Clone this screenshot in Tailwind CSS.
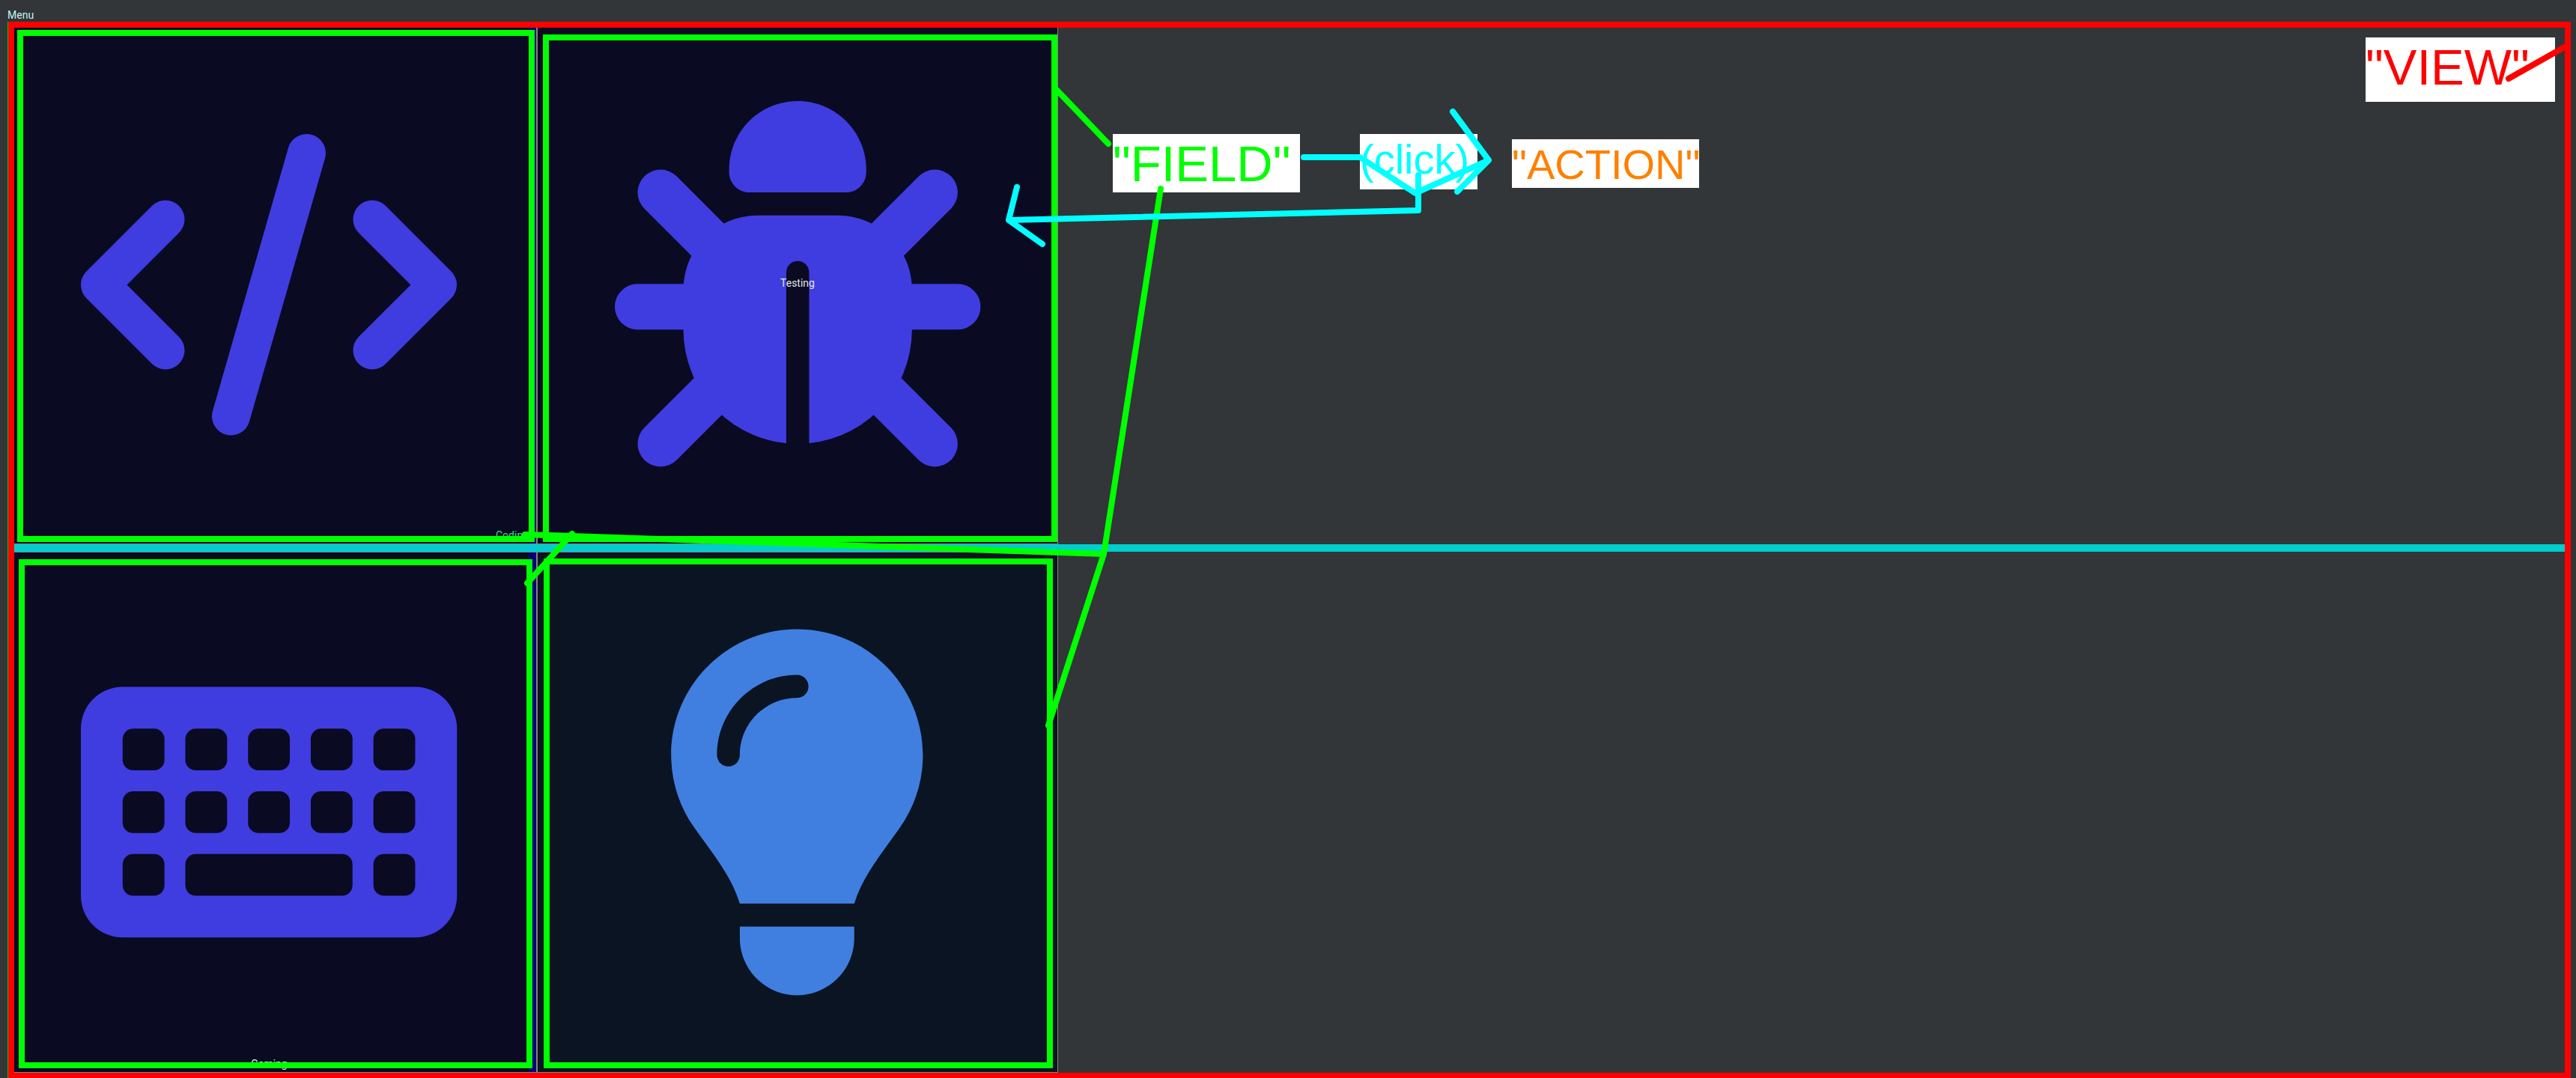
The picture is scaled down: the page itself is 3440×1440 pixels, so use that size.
<!DOCTYPE html>
<html lang="en">
<head>
<meta charset="utf-8">
<title>Menu</title>
<script src="https://cdn.jsdelivr.net/npm/@tailwindcss/browser@4"></script>
</head>
<body class="bg-[#323638]">
<div class="relative flex min-h-screen flex-col overflow-hidden font-['Roboto',sans-serif] text-sm text-gray-200">
  <h1 class="h-[29px] pl-[10px] pt-[9px] leading-[22px] text-[#c4f4f4]">Menu</h1>

  <div class="mr-[7px] ml-[10px] flex flex-1 border-l border-[#00c800]">
    <main class="flex flex-1 flex-col border-8 border-b-[7px] border-[#ff0000]">

      <!-- top row -->
      <div class="flex flex-[690]">
        <div class="flex gap-[2px] border-r border-b border-[#8b8178] bg-[#8b8178]">
          <button class="relative w-[697px] border-r-[10px] border-[#00007a] bg-[#0a0a23]" aria-label="Coding">
            <svg class="absolute top-0 left-0 h-full w-[697px]" viewBox="19 37 697 689" fill="none" stroke="#3f3ddf" stroke-width="51" stroke-linecap="round" stroke-linejoin="round">
              <path d="M221 293 133.500 380.500 221 468M497 293 584.500 380.500 497 468M409.500 204.500 308.500 556"/>
            </svg>
            <span class="absolute right-0 bottom-0 leading-[22px] text-[#3ddc84]">Coding</span>
            <span class="absolute top-[3px] -right-2 bottom-[2px] left-1 border-8 border-[#00ff00]"></span>
          </button>
          <button class="relative w-[694px] bg-[#0a0a23]" aria-label="Testing">
            <svg class="absolute inset-0 h-full w-full" viewBox="718 37 694 689">
              <g transform="translate(821 135) scale(.954)" fill="#3f3ddf">
                <path d="M256 0c53 0 96 43 96 96v3.600c0 15.700-12.700 28.400-28.400 28.400H188.400c-15.700 0-28.400-12.700-28.400-28.400V96c0-53 43-96 96-96z"/>
                <path d="M200 160H312c57.400 0 104 46.600 104 104v56a160 160 0 0 1-320 0v-56c0-57.400 46.600-104 104-104z"/>
                <path d="M64 128 192 256M448 128 320 256M32 288H480M64 480 192 352M448 480 320 352" fill="none" stroke="#3f3ddf" stroke-width="64" stroke-linecap="round"/>
                <path d="M240 484V240a16 16 0 0 1 32 0V484z" fill="#0a0a23"/>
              </g>
            </svg>
            <span class="absolute inset-0 flex items-center justify-center pb-2">Testing</span>
            <span class="absolute top-[9px] right-0 bottom-[2px] left-[7px] border-8 border-[#00ff00]"></span>
          </button>
        </div>
      </div>

      <div class="h-[10px] bg-[#00cdcd]"></div>

      <!-- bottom row -->
      <div class="flex flex-[696]">
        <div class="flex gap-[2px] border border-l-0 border-[#8b8178] bg-[#8b8178]">
          <button class="relative w-[697px] border-r-[10px] border-[#00007a] bg-[#0a0a23]" aria-label="Gaming">
            <svg class="absolute top-0 left-0 h-full w-[697px]" viewBox="19 738 697 694">
              <g transform="translate(108 917.500) scale(.872)">
                <rect width="576" height="384" rx="64" fill="#3f3ddf"/>
                <g fill="#0a0a23">
                  <rect x="64" y="64" width="64" height="64" rx="16"/>
                  <rect x="160" y="64" width="64" height="64" rx="16"/>
                  <rect x="256" y="64" width="64" height="64" rx="16"/>
                  <rect x="352" y="64" width="64" height="64" rx="16"/>
                  <rect x="448" y="64" width="64" height="64" rx="16"/>
                  <rect x="64" y="160" width="64" height="64" rx="16"/>
                  <rect x="160" y="160" width="64" height="64" rx="16"/>
                  <rect x="256" y="160" width="64" height="64" rx="16"/>
                  <rect x="352" y="160" width="64" height="64" rx="16"/>
                  <rect x="448" y="160" width="64" height="64" rx="16"/>
                  <rect x="64" y="256" width="64" height="64" rx="16"/>
                  <rect x="160" y="256" width="256" height="64" rx="16"/>
                  <rect x="448" y="256" width="64" height="64" rx="16"/>
                </g>
              </g>
            </svg>
            <span class="absolute inset-x-0 bottom-0 pr-[6px] text-center leading-[22px]">Gaming</span>
            <span class="absolute top-[9px] -right-[5px] bottom-[5px] left-[6px] border-8 border-[#00ff00]"></span>
          </button>
          <button class="relative w-[694px] bg-[#0a1423]" aria-label="Ideas">
            <svg class="absolute inset-0 h-full w-full" viewBox="718 738 694 694">
              <path transform="translate(881 840.500) scale(.955)" fill="#407fe0" d="M272 384c9.600-31.900 29.500-59.100 49.200-86.200c5.200-7.100 10.400-14.200 15.400-21.400c19.800-28.500 31.400-63 31.400-100.300C368 78.800 289.200 0 192 0S16 78.800 16 176c0 37.300 11.600 71.900 31.400 100.300c5 7.200 10.200 14.300 15.400 21.400c19.800 27.100 39.700 54.400 49.200 86.200H272zM192 512c44.200 0 80-35.800 80-80V416H112v16c0 44.200 35.800 80 80 80zM112 176c0 8.800-7.200 16-16 16s-16-7.200-16-16c0-61.900 50.100-112 112-112c8.800 0 16 7.200 16 16s-7.200 16-16 16c-44.200 0-80 35.800-80 80z"/>
            </svg>
            <span class="absolute top-2 right-[6px] bottom-[5px] left-2 border-8 border-[#00ff00]"></span>
          </button>
        </div>
      </div>
    </main>
  </div>

  <!-- annotations over the menu -->
  <div class="pointer-events-none absolute inset-0 font-['Liberation_Sans',Arial,sans-serif] whitespace-nowrap">
    <div class="absolute top-[179px] left-[1486px] h-[78px] w-[250px] bg-white text-[67px] leading-[80px] text-[#00ff00]">"FIELD"</div>
    <div class="absolute top-[179px] left-[1816px] h-[74px] w-[157px] bg-white text-[56px] leading-[67px] text-[#00ffff]">(click)</div>
    <div class="absolute top-[186px] left-[2019px] h-[65px] w-[250px] bg-white text-[56px] leading-[67px] text-[#ff8000]">"ACTION"</div>
    <div class="absolute top-[50px] right-[28px] h-[86px] w-[253px] bg-white text-[67px] leading-[80px] text-[#ff0000]">"VIEW"</div>
    <svg class="absolute top-0 left-0" width="2100" height="1000" fill="none" stroke-width="8" stroke-linecap="round" stroke-linejoin="round">
      <path stroke="#00ff00" d="M1411 120 1480 192M1550 252 1474 740 1400 969M1474 740 701 714M764 713 704 779"/>
      <path stroke="#00ffff" d="M1741 210H1816L1890 258 1988 214M1940 149 1988 214 1946 256M1894 234V281L1347 294M1358 250 1347 294 1392 326"/>
    </svg>
    <svg class="absolute top-0 right-0" width="100" height="140" fill="none">
      <path d="M10 105 88 61" stroke="#ff0000" stroke-width="8" stroke-linecap="round"/>
    </svg>
  </div>
</div>
</body>
</html>
